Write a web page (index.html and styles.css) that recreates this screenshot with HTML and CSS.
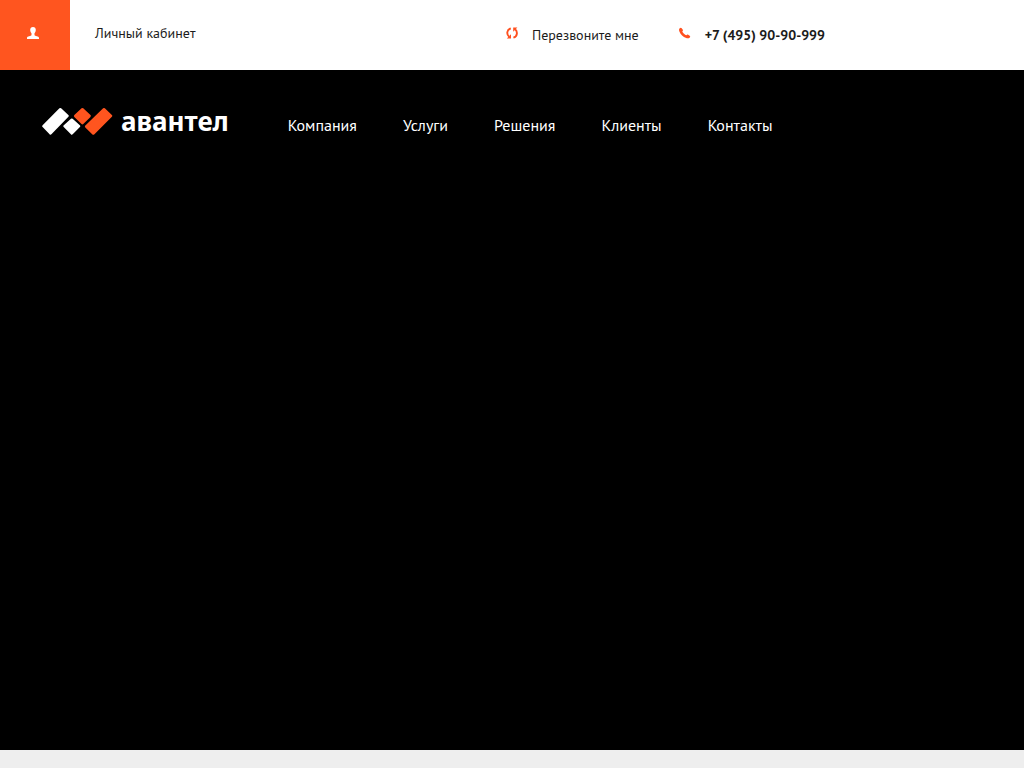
FILE: index.html
```html
<!DOCTYPE html>
<html lang="ru">
<head>
<meta charset="utf-8">
<meta name="viewport" content="width=device-width, initial-scale=1">
<title>Авантел</title>
<link rel="stylesheet" href="styles.css">
</head>
<body>
<div class="topbar">
  <a class="account" href="#">
    <span class="account-icon">
      <svg width="12" height="12" viewBox="0 0 12 12" aria-hidden="true"><path fill="#fff" d="M6 0C4.200 0 3.200 1.100 3.200 2.800c0 1.400.5 2.700 1.300 3.500v1.700C4.300 9.200 0 8.900 0 11V12h12v-1C12 8.900 7.700 9.200 7.500 8V6.300c.8-.8 1.300-2.100 1.300-3.500C8.800 1.100 7.800 0 6 0z"/></svg>
    </span>
    <span class="account-label">Личный кабинет</span>
  </a>
  <div class="contacts">
    <a class="contact" href="#">
      <svg class="contact-icon" width="12" height="12" viewBox="0 0 12 12" aria-hidden="true"><g fill="none" stroke="#ff501f" stroke-width="1.900"><path d="M4.800 1.300C.6 2.600.4 7.600 3.100 9.700"/><path d="M7.400 10.700C11.600 9.400 11.800 4.400 9.100 2.300"/></g><path fill="#ff501f" d="M.8 11.400h4.200V7.200zM11.400.6h-4.200V4.800z"/></svg>
      <span>Перезвоните мне</span>
    </a>
    <a class="contact phone" href="tel:+74959090999">
      <svg class="contact-icon" width="12" height="12" viewBox="0 0 12 12" aria-hidden="true"><path fill="#ff501f" d="M.7 1.200C1.400.4 2.200.5 2.700 1.200l1.100 1.500c.4.600.1 1.100-.5 1.700C4 6 5.800 7.600 7.400 8.200c.7-.8 1.200-.9 1.800-.5l1.500 1c.7.500.6 1.200.1 1.700-.9 1-2.200 1.200-3.600.7C4 9.900 1.600 7.600.5 4.700-.1 3.300-.2 2.100.7 1.200z"/></svg>
      <span>+7 (495) 90-90-999</span>
    </a>
  </div>
</div>
<header class="hero">
  <div class="header-row">
    <a class="logo" href="#">
      <svg width="72" height="28" viewBox="0 0 72 28" aria-hidden="true"><g stroke-width="2.500" stroke-linejoin="round"><g fill="#fff" stroke="#fff"><path d="M2.500 19.200L19.300 2.200l7.200 6.600L9.500 26.500z"/><path d="M30.800 12.700l7.200 6.400-7.200 7.400-7.200-7.400z"/></g><g fill="#ff551f" stroke="#ff551f"><path d="M41.400 2.200l7.200 6.800-7.200 7.200L34.200 9z"/><path d="M45.200 19.500L63 2.200l7 6.600L52.300 26.500z"/></g></g></svg>
      <span class="logo-text">авантел</span>
    </a>
    <nav class="nav" aria-label="Основное меню">
      <a href="#">Компания</a>
      <a href="#">Услуги</a>
      <a href="#">Решения</a>
      <a href="#">Клиенты</a>
      <a href="#">Контакты</a>
    </nav>
  </div>
</header>
</body>
</html>
```
FILE: styles.css
```css
body {
  margin: 0;
  min-height: 100vh;
  display: flex;
  flex-direction: column;
  background: #eee;
  color: #1c1c1c;
  font-family: "PT Sans", "Noto Sans", sans-serif;
  font-size: 14px;
  line-height: 20px;
}

a {
  color: inherit;
  text-decoration: none;
}

svg {
  display: block;
  flex: none;
}

.topbar {
  display: flex;
  justify-content: space-between;
  background: #fff;
}

.account {
  display: flex;
  align-items: center;
  gap: 25px;
}

.account-icon {
  display: flex;
  align-items: center;
  justify-content: center;
  box-sizing: border-box;
  width: 70px;
  height: 70px;
  padding: 0 4px 4px 0;
  background: #ff551f;
}

.account-label {
  padding-bottom: 4px;
}

.contacts {
  display: flex;
  align-items: center;
  gap: 40px;
  padding-right: 199px;
}

.contact {
  display: flex;
  gap: 14px;
}

.contact-icon {
  margin-top: 2px;
}

.phone {
  font-weight: 600;
}

.hero {
  flex: 1;
  margin-bottom: 18px;
  background: #000;
  color: #fff;
}

.header-row {
  display: flex;
  align-items: center;
  gap: 59px;
  padding: 33px 41px;
}

.logo {
  display: flex;
  align-items: center;
  gap: 8px;
}

.logo-text {
  font-family: "Noto Sans", sans-serif;
  font-size: 26px;
  font-weight: 700;
  line-height: 36px;
}

.nav {
  display: flex;
  gap: 46px;
  padding-top: 8px;
  font-size: 16px;
}
```
